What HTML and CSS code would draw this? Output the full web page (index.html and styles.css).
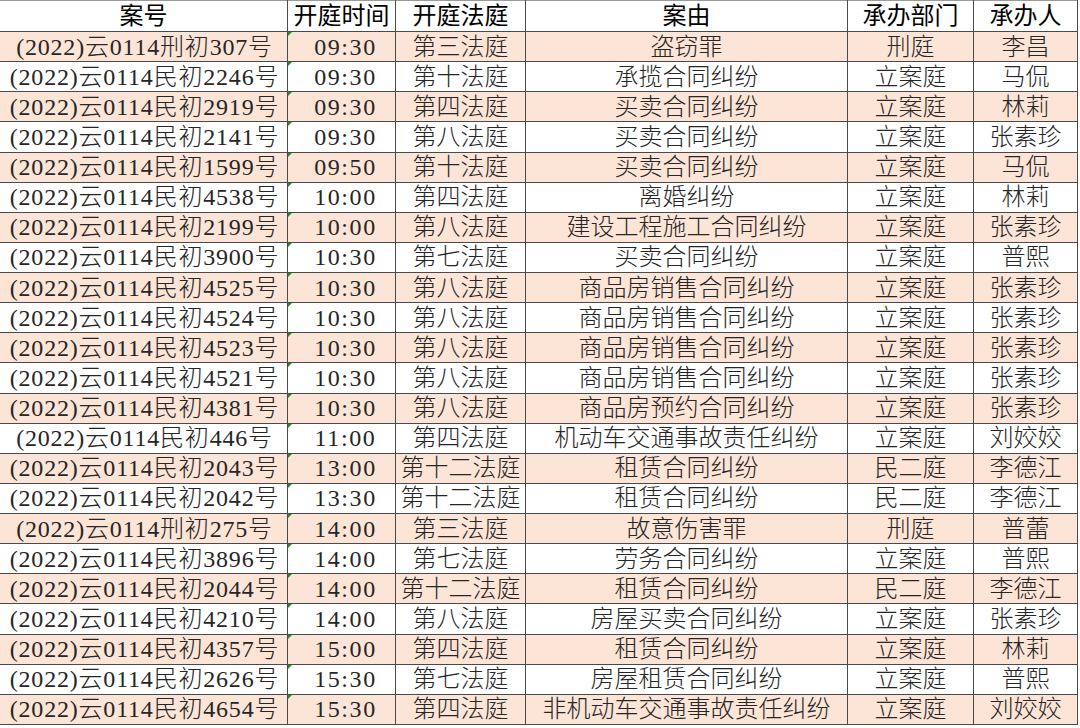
FILE: index.html
```html
<!DOCTYPE html>
<html lang="zh-CN">
<head>
<meta charset="utf-8">
<title>开庭公告</title>
<link rel="stylesheet" href="styles.css">
</head>
<body>
<table class="sheet">
<colgroup>
<col class="c1"><col class="c2"><col class="c3"><col class="c4"><col class="c5"><col class="c6">
</colgroup>
<thead>
<tr><th>案号</th><th>开庭时间</th><th>开庭法庭</th><th>案由</th><th>承办部门</th><th>承办人</th></tr>
</thead>
<tbody>
<tr class="alt"><td>(2022)云0114刑初307号</td><td class="t">09:30</td><td>第三法庭</td><td>盗窃罪</td><td>刑庭</td><td>李昌</td></tr>
<tr><td>(2022)云0114民初2246号</td><td class="t">09:30</td><td>第十法庭</td><td>承揽合同纠纷</td><td>立案庭</td><td>马侃</td></tr>
<tr class="alt"><td>(2022)云0114民初2919号</td><td class="t">09:30</td><td>第四法庭</td><td>买卖合同纠纷</td><td>立案庭</td><td>林莉</td></tr>
<tr><td>(2022)云0114民初2141号</td><td class="t">09:30</td><td>第八法庭</td><td>买卖合同纠纷</td><td>立案庭</td><td>张素珍</td></tr>
<tr class="alt"><td>(2022)云0114民初1599号</td><td class="t">09:50</td><td>第十法庭</td><td>买卖合同纠纷</td><td>立案庭</td><td>马侃</td></tr>
<tr><td>(2022)云0114民初4538号</td><td class="t">10:00</td><td>第四法庭</td><td>离婚纠纷</td><td>立案庭</td><td>林莉</td></tr>
<tr class="alt"><td>(2022)云0114民初2199号</td><td class="t">10:00</td><td>第八法庭</td><td>建设工程施工合同纠纷</td><td>立案庭</td><td>张素珍</td></tr>
<tr><td>(2022)云0114民初3900号</td><td class="t">10:30</td><td>第七法庭</td><td>买卖合同纠纷</td><td>立案庭</td><td>普熙</td></tr>
<tr class="alt"><td>(2022)云0114民初4525号</td><td class="t">10:30</td><td>第八法庭</td><td>商品房销售合同纠纷</td><td>立案庭</td><td>张素珍</td></tr>
<tr><td>(2022)云0114民初4524号</td><td class="t">10:30</td><td>第八法庭</td><td>商品房销售合同纠纷</td><td>立案庭</td><td>张素珍</td></tr>
<tr class="alt"><td>(2022)云0114民初4523号</td><td class="t">10:30</td><td>第八法庭</td><td>商品房销售合同纠纷</td><td>立案庭</td><td>张素珍</td></tr>
<tr><td>(2022)云0114民初4521号</td><td class="t">10:30</td><td>第八法庭</td><td>商品房销售合同纠纷</td><td>立案庭</td><td>张素珍</td></tr>
<tr class="alt"><td>(2022)云0114民初4381号</td><td class="t">10:30</td><td>第八法庭</td><td>商品房预约合同纠纷</td><td>立案庭</td><td>张素珍</td></tr>
<tr><td>(2022)云0114民初446号</td><td class="t">11:00</td><td>第四法庭</td><td>机动车交通事故责任纠纷</td><td>立案庭</td><td>刘姣姣</td></tr>
<tr class="alt"><td>(2022)云0114民初2043号</td><td class="t">13:00</td><td>第十二法庭</td><td>租赁合同纠纷</td><td>民二庭</td><td>李德江</td></tr>
<tr><td>(2022)云0114民初2042号</td><td class="t">13:30</td><td>第十二法庭</td><td>租赁合同纠纷</td><td>民二庭</td><td>李德江</td></tr>
<tr class="alt"><td>(2022)云0114刑初275号</td><td class="t">14:00</td><td>第三法庭</td><td>故意伤害罪</td><td>刑庭</td><td>普蕾</td></tr>
<tr><td>(2022)云0114民初3896号</td><td class="t">14:00</td><td>第七法庭</td><td>劳务合同纠纷</td><td>立案庭</td><td>普熙</td></tr>
<tr class="alt"><td>(2022)云0114民初2044号</td><td class="t">14:00</td><td>第十二法庭</td><td>租赁合同纠纷</td><td>民二庭</td><td>李德江</td></tr>
<tr><td>(2022)云0114民初4210号</td><td class="t">14:00</td><td>第八法庭</td><td>房屋买卖合同纠纷</td><td>立案庭</td><td>张素珍</td></tr>
<tr class="alt"><td>(2022)云0114民初4357号</td><td class="t">15:00</td><td>第四法庭</td><td>租赁合同纠纷</td><td>立案庭</td><td>林莉</td></tr>
<tr><td>(2022)云0114民初2626号</td><td class="t">15:30</td><td>第七法庭</td><td>房屋租赁合同纠纷</td><td>立案庭</td><td>普熙</td></tr>
<tr class="alt"><td>(2022)云0114民初4654号</td><td class="t">15:30</td><td>第四法庭</td><td>非机动车交通事故责任纠纷</td><td>立案庭</td><td>刘姣姣</td></tr>
</tbody>
</table>
</body>
</html>
```

FILE: styles.css
```css
html, body {
  margin: 0;
  padding: 0;
  background: #ffffff;
}

.sheet {
  border-collapse: collapse;
  table-layout: fixed;
  width: 1078px;
  margin-left: -1px;
  font-family: "Liberation Serif", "Noto Sans CJK SC", serif;
  font-size: 24px;
  color: #262626;
}

.c1 { width: 288px; }
.c2 { width: 108px; }
.c3 { width: 130px; }
.c4 { width: 322px; }
.c5 { width: 126px; }
.c6 { width: 104px; }

.sheet th,
.sheet td {
  border: 1px solid #4a4a4a;
  padding: 0;
  text-align: center;
  vertical-align: middle;
  white-space: nowrap;
  overflow: hidden;
  line-height: 28px;
}

.sheet th {
  height: 30px;
  font-weight: 400;
  color: #000000;
  border-top-color: #9a9a9a;
}

.sheet td {
  height: 29.13px;
  font-weight: 300;
}

.sheet td:first-child {
  letter-spacing: 0.8px;
  padding-left: 2px;
}

.sheet tr.alt td {
  background: #fce4d6;
}

.sheet td.t {
  position: relative;
  letter-spacing: 1.6px;
  padding-left: 8px;
}

.sheet td.t::before {
  content: "";
  position: absolute;
  left: 0;
  top: 0;
  border-top: 4px solid #1e8c2e;
  border-right: 4px solid transparent;
}
```
